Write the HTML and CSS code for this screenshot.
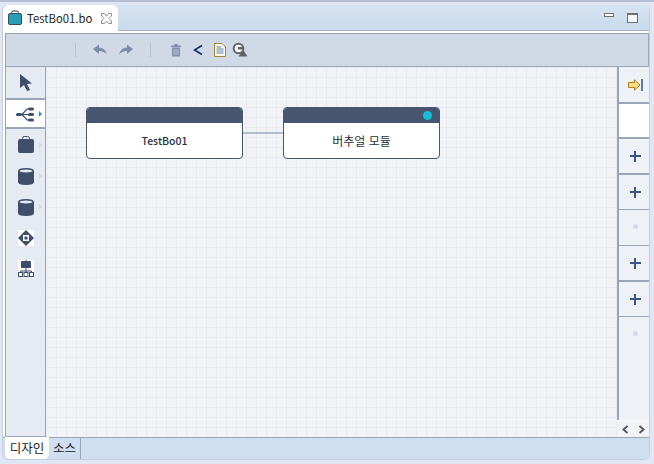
FILE: index.html
```html
<!DOCTYPE html>
<html lang="ko">
<head>
<meta charset="utf-8">
<title>TestBo01.bo</title>
<link rel="stylesheet" href="styles.css">
</head>
<body>
<div class="window">
  <div class="tabbar">
    <div class="tab">
      <svg class="tab-icon" width="16" height="16" viewBox="0 0 16 16"><path d="M4.500 5V2.500Q4.500 1 6 1H10Q11.500 1 11.500 2.500V5" fill="none" stroke="#333d4f" stroke-width="1"/><rect x="1.500" y="3.500" width="13" height="11" rx="1.500" fill="#2a9db8" stroke="#2f4d5c"/></svg>
      <span class="tab-title">TestBo01.bo</span>
      <svg class="tab-close" width="11" height="11" viewBox="0 0 11 11"><path d="M.5 .5H3.500L5.500 3L7.500 .5H10.500V3L8 5.500L10.500 8V10.500H7.500L5.500 8L3.500 10.500H.5V8L3 5.500L.5 3Z" fill="#fff" stroke="#8d8d8d" stroke-width="1"/></svg>
    </div>
    <div class="win-controls">
      <span class="win-min"></span>
      <span class="win-max"></span>
    </div>
  </div>
  <div class="frame">
    <div class="toolbar">
      <span class="sep sep-first"></span>
      <svg class="tool tool-undo" width="16" height="16" viewBox="0 0 16 16"><path d="M1 7L7 2.500V5.500Q13 5.500 15 12.500Q12 9 7 9V12Z" fill="#7f8cab"/></svg>
      <svg class="tool tool-redo" width="16" height="16" viewBox="0 0 16 16"><path d="M15 7L9 2.500V5.500Q3 5.500 1 12.500Q4 9 9 9V12Z" fill="#7f8cab"/></svg>
      <span class="sep sep-second"></span>
      <svg class="tool tool-trash" width="12" height="14" viewBox="0 0 12 14"><path d="M1 2.500H11V4H1ZM4.500 1H7.500V2.500H4.500ZM2 4.500H10V13.500H2Z" fill="#7f8cab"/><path d="M4 6V12M6 6V12M8 6V12" stroke="#d2d9e6" stroke-width=".8"/></svg>
      <svg class="tool tool-share" width="10" height="12" viewBox="0 0 10 12"><path d="M9 1.500L1.500 6L9 10.500" fill="none" stroke="#12246b" stroke-width="1.500"/></svg>
      <svg class="tool tool-doc" width="12" height="14" viewBox="0 0 12 14"><path d="M.5 .5H8L11.500 4V13.500H.5Z" fill="#fdfbe8" stroke="#a5853c"/><path d="M2.500 4H7M2.500 6H9.500M2.500 8H9.500M2.500 10H9.500" stroke="#5a83bd"/></svg>
      <svg class="tool tool-run" width="16" height="16" viewBox="0 0 16 16"><circle cx="6.500" cy="6.500" r="5.800" fill="#5f6369"/><circle cx="6.500" cy="6.500" r="3.800" fill="#fff"/><rect x="6" y="5" width="6" height="2.500" fill="#5f6369"/><path d="M11 7.500L15.500 14.500H6.500Z" fill="#5f6369"/></svg>
    </div>
    <div class="workspace">
      <div class="palette">
        <div class="pal-item pal-pointer">
          <svg width="14" height="17" viewBox="0 0 14 17"><path d="M1 0L13 9.500L8 10L11 16L8 17L5 11L1 14Z" fill="#3f4e6b"/></svg>
        </div>
        <div class="pal-item pal-selected">
          <svg width="19" height="17" viewBox="0 0 19 17"><path d="M5 8.500H17M6 8.500L11 3H17M6 8.500L11 14H17" fill="none" stroke="#3f4e6b" stroke-width="1.200"/><rect x="0" y="7" width="6" height="3" rx="1.500" fill="#3f4e6b"/><rect x="12" y="1.500" width="6" height="3" rx="1.500" fill="#3f4e6b"/><rect x="12" y="7" width="6" height="3" rx="1.500" fill="#3f4e6b"/><rect x="12" y="12.500" width="6" height="3" rx="1.500" fill="#3f4e6b"/></svg>
          <span class="pal-arrow pal-arrow-on"></span>
        </div>
        <div class="pal-item">
          <svg width="16" height="17" viewBox="0 0 16 17"><path d="M4.500 4V2.500Q4.500 .5 6.500 .5H9.500Q11.500 .5 11.500 2.500V4" fill="none" stroke="#3f4e6b"/><rect x="0" y="3" width="16" height="14" rx="2" fill="#3f4e6b"/></svg>
          <span class="pal-arrow"></span>
        </div>
        <div class="pal-item pal-low">
          <svg width="16" height="17" viewBox="0 0 16 17"><path d="M0 3Q0 0 8 0Q16 0 16 3V14Q16 17 8 17Q0 17 0 14Z" fill="#3f4e6b"/><ellipse cx="8" cy="3" rx="6.500" ry="1.500" fill="#e4e9f3"/></svg>
          <span class="pal-arrow"></span>
        </div>
        <div class="pal-item pal-low">
          <svg width="16" height="17" viewBox="0 0 16 17"><path d="M0 3Q0 0 8 0Q16 0 16 3V14Q16 17 8 17Q0 17 0 14Z" fill="#3f4e6b"/><ellipse cx="8" cy="3" rx="6.500" ry="1.500" fill="#e4e9f3"/></svg>
          <span class="pal-arrow"></span>
        </div>
        <div class="pal-item">
          <svg width="16" height="16" viewBox="0 0 16 16"><rect width="16" height="16" fill="#fff"/><path d="M8 0L16 8L8 16L0 8Z" fill="#3f4e6b"/><rect x="5" y="5" width="6" height="6" fill="#fff"/><rect x="6.500" y="6.500" width="3" height="3" fill="#3f4e6b"/></svg>
        </div>
        <div class="pal-item">
          <svg width="16" height="17" viewBox="0 0 16 17"><rect width="16" height="17" fill="#fff"/><rect x="3" y="1" width="10" height="7" rx="1" fill="#3f4e6b"/><path d="M8 0V11M2.500 11H13.500M2.500 11V12M8 11V12M13.500 11V12" stroke="#3f4e6b" fill="none"/><rect x=".5" y="12.500" width="4" height="4" fill="#fff" stroke="#3f4e6b"/><rect x="6" y="12.500" width="4" height="4" fill="#fff" stroke="#3f4e6b"/><rect x="11.500" y="12.500" width="4" height="4" fill="#fff" stroke="#3f4e6b"/></svg>
        </div>
      </div>
      <div class="canvas">
        <div class="node node-a">
          <div class="node-head"></div>
          <div class="node-body">TestBo01</div>
        </div>
        <div class="link"></div>
        <div class="node node-b">
          <div class="node-head"><span class="node-dot"></span></div>
          <div class="node-body">버추얼 모듈</div>
        </div>
      </div>
      <div class="side">
        <div class="side-btn side-arrow">
          <svg width="15" height="12" viewBox="0 0 15 12"><path d="M.5 3.500H6.500V.8L12 6L6.500 11.200V8.500H.5Z" fill="#fbdc85" stroke="#b87a14"/><rect x="13" y="0" width="2" height="12" fill="#5a7fb5"/></svg>
        </div>
        <div class="side-blank"></div>
        <div class="side-btn heavy"><span class="plus"></span></div>
        <div class="side-btn thin short"><span class="plus"></span></div>
        <div class="side-btn thin dotted"><span class="dot"></span></div>
        <div class="side-btn heavy"><span class="plus"></span></div>
        <div class="side-btn thin short"><span class="plus"></span></div>
        <div class="side-btn last dotted"><span class="dot"></span></div>
      </div>
    </div>
    <div class="scroll-corner">
      <svg width="7" height="9" viewBox="0 0 7 9"><path d="M5.500 1L1.500 4.500L5.500 8" fill="none" stroke="#565b64" stroke-width="2"/></svg>
      <svg width="7" height="9" viewBox="0 0 7 9"><path d="M1.500 1L5.500 4.500L1.500 8" fill="none" stroke="#565b64" stroke-width="2"/></svg>
    </div>
  </div>
  <div class="bottom-tabs">
    <div class="btab btab-on">디자인</div>
    <div class="btab">소스</div>
  </div>
</div>
</body>
</html>
```
FILE: styles.css
```css
* { box-sizing: border-box; }
html, body { margin: 0; padding: 0; }
body {
  width: 654px;
  height: 464px;
  overflow: hidden;
  background: #e0e6f4;
  padding: 4px 4px 4px 2px;
  font-family: "Noto Sans CJK KR", "Noto Sans", sans-serif;
  border-top: 2px solid #b7bfd2;
}
.window {
  width: 648px;
  height: 455px;
  margin-top: -1px;
  display: flex;
  flex-direction: column;
  background: #fff;
  border-radius: 6px;
  border: 1px solid #c6cddd;
  border-top: 0;
  overflow: hidden;
}
.tabbar {
  height: 26px;
  flex: none;
  display: flex;
  justify-content: space-between;
  background: linear-gradient(#d6e3f2, #c9daeb);
  border-bottom: 1px solid #a5afc0;
}
.tab {
  width: 115px;
  height: 26px;
  background: #fff;
  border-radius: 6px 6px 0 0;
  display: flex;
  align-items: center;
  padding: 0 0 0 4px;
  font-size: 11.300px;
  color: #1c1c1c;
}
.tab-icon { flex: none; margin-right: 4px; }
.tab-title { width: 74px; white-space: nowrap; }
.tab-close { flex: none; }
.win-controls { display: flex; align-items: flex-start; padding: 8px 11px 0 0; gap: 13px; }
.win-min { width: 10px; height: 4px; border: 1px solid #6f6f6f; background: #fff; }
.win-max { width: 11px; height: 10px; border: 1px solid #6f6f6f; border-top-width: 2px; background: #f4f8fc; }
.frame {
  flex: 1;
  display: flex;
  flex-direction: column;
  padding: 2px 0 0 2px;
  position: relative;
  min-height: 0;
}
.toolbar {
  height: 34px;
  flex: none;
  display: flex;
  align-items: center;
  background: #d2d9e6;
  border: 1px solid #9aa6b8;
}
.sep { width: 1px; height: 14px; background: #b9c1d1; flex: none; }
.sep-first { margin-left: 69px; }
.tool { flex: none; }
.tool-undo { margin-left: 16px; }
.tool-redo { margin-left: 10px; }
.sep-second { margin-left: 16px; }
.tool-trash { margin-left: 19px; }
.tool-share { margin-left: 11px; }
.tool-doc { margin-left: 11px; }
.tool-run { margin-left: 6px; }
.workspace {
  flex: 1;
  min-height: 0;
  display: flex;
}
.palette {
  width: 41px;
  flex: none;
  background: #e5eaf3;
  border-left: 1px solid #9aa6b8;
  border-right: 1px solid #9aa6b8;
  border-bottom: 1px solid #9aa6b8;
  display: flex;
  flex-direction: column;
}
.pal-item {
  display: flex;
  align-items: center;
  justify-content: center;
  position: relative;
  height: 31px;
  flex: none;
}
.pal-pointer { height: 33px; border-bottom: 2px solid #9aa6b8; }
.pal-selected { background: #fff; height: 29px; padding-top: 1px; border-bottom: 2px solid #9aa6b8; }
.pal-low { padding-top: 2px; }
.pal-arrow {
  position: absolute;
  right: 3px;
  top: 50%;
  margin-top: -3px;
  border-left: 3px solid #d0d6e2;
  border-top: 3px solid transparent;
  border-bottom: 3px solid transparent;
}
.pal-arrow-on { border-left-color: #2a8fdf; }
.canvas {
  flex: 1;
  position: relative;
  background-color: #f1f3f7;
  background-image:
    linear-gradient(#e9ebf1 1px, transparent 1px),
    linear-gradient(90deg, #e9ebf1 1px, transparent 1px);
  background-size: 10px 10px;
}
.node {
  position: absolute;
  top: 40px;
  width: 157px;
  height: 52px;
  background: #fff;
  border: 1px solid #47556f;
  border-radius: 4px;
  overflow: hidden;
  display: flex;
  flex-direction: column;
}
.node-a { left: 40px; }
.node-b { left: 237px; }
.node-head {
  height: 15px;
  flex: none;
  background: #47556f;
  position: relative;
}
.node-dot {
  position: absolute;
  right: 7px;
  top: 3px;
  width: 9px;
  height: 9px;
  border-radius: 50%;
  background: #17bdd8;
}
.node-body {
  flex: 1;
  display: flex;
  align-items: center;
  justify-content: center;
  font-size: 12px;
  color: #2b3240;
}
.node-a .node-body { font-size: 10.500px; font-weight: 500; }
.link {
  position: absolute;
  left: 197px;
  top: 65px;
  width: 40px;
  height: 2px;
  background: #b3bccf;
}
.side {
  width: 32px;
  flex: none;
  background: #eef1f6;
  border-left: 2px solid #9aa6b8;
  display: flex;
  flex-direction: column;
}
.side-btn {
  display: flex;
  align-items: center;
  justify-content: center;
  height: 36px;
  flex: none;
  padding-left: 2px;
  border-bottom: 1px solid #9aa6b8;
}
.side-btn.heavy { border-bottom-width: 2px; }
.side-btn.short { height: 35px; }
.side-btn.dotted { padding-bottom: 3px; }
.side-arrow { height: 37px; border-bottom: 2px solid #9aa6b8; padding-left: 3px; }
.side-blank { height: 35px; flex: none; background: #fff; border-bottom: 2px solid #9aa6b8; }
.side-btn.last { border-bottom: 0; }
.plus { width: 11px; height: 11px; background:
  linear-gradient(#3c5488, #3c5488) center / 11px 2px no-repeat,
  linear-gradient(#3c5488, #3c5488) center / 2px 11px no-repeat; }
.dot { width: 5px; height: 5px; border-radius: 50%; background: #d3daea; }
.scroll-corner {
  position: absolute;
  right: 0;
  bottom: 0;
  width: 32px;
  height: 17px;
  background: #f1f3f7;
  border-top: 1px solid #fff;
  display: flex;
  align-items: center;
  justify-content: center;
  gap: 9px;
}
.bottom-tabs {
  flex: none;
  height: 22px;
  display: flex;
  padding-left: 2px;
  background: #cfdfef;
  border-top: 1px solid #9aa6b8;
  font-size: 12.500px;
  color: #1c1c1c;
}
.btab {
  width: 32px;
  display: flex;
  align-items: center;
  justify-content: center;
  border-right: 1px solid #9aa6b8;
  line-height: 1;
}
.btab-on {
  width: 44px;
  background: #fff;
  border-right: 0;
  border-radius: 0 0 5px 5px;
  margin-top: -1px;
}
```
